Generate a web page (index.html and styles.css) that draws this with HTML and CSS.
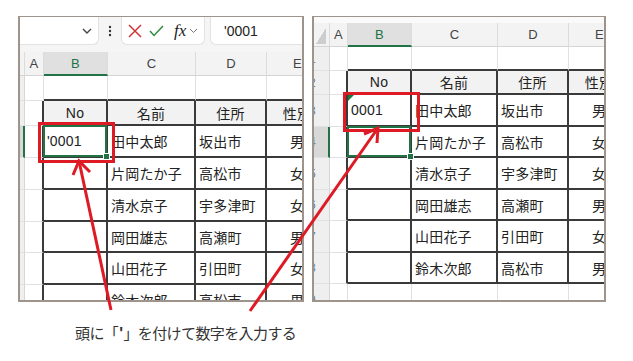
FILE: index.html
```html
<!DOCTYPE html>
<html lang="ja">

<head>
    <meta charset="UTF-8">
    <meta name="viewport" content="width=device-width, initial-scale=1.0">
    <title>Excel 0001</title>
    <link rel="stylesheet" href="styles.css">
</head>

<body>
    <div id="page">
        <div id="panels">
            <!-- before: typing '0001 -->
            <div class="panel left">
                <div class="fbar">
                    <div class="namebox">
                        <svg width="10" height="6" viewBox="0 0 10 6"><polyline points="1,1 5,5 9,1" fill="none" stroke="#444" stroke-width="1.4"/></svg>
                    </div>
                    <div class="dots">
                        <svg width="4" height="12" viewBox="0 0 4 12"><circle cx="2" cy="2" r="1.2" fill="#333"/><circle cx="2" cy="6" r="1.2" fill="#333"/><circle cx="2" cy="10" r="1.2" fill="#333"/></svg>
                    </div>
                    <div class="fbtns">
                        <svg width="14" height="14" viewBox="0 0 14 14"><path d="M1 1 L13 13 M13 1 L1 13" stroke="#d13438" stroke-width="1.5" fill="none"/></svg>
                        <svg width="15" height="12" viewBox="0 0 15 12"><polyline points="1,6 5,10.5 14,1" fill="none" stroke="#2e8b3e" stroke-width="1.5"/></svg>
                        <span class="fx">fx</span>
                        <svg width="9" height="6" viewBox="0 0 9 6"><polyline points="1,1 4.5,4.5 8,1" fill="none" stroke="#777" stroke-width="1"/></svg>
                    </div>
                    <div class="finput">'0001</div>
                </div>
                <div class="row h24 hdr">
                    <div class="c rh"></div><div class="c">A</div><div class="c sel">B</div><div class="c">C</div><div class="c">D</div><div class="c">E</div>
                </div>
                <div class="row h25">
                    <div class="c rh"></div><div class="c"></div><div class="c bt"></div><div class="c bt"></div><div class="c bt"></div><div class="c bt"></div>
                </div>
                <div class="row h25">
                    <div class="c rh"></div><div class="c bl"></div><div class="c t th">No</div><div class="c t th">名前</div><div class="c t th">住所</div><div class="c t th">性別</div>
                </div>
                <div class="row h32">
                    <div class="c rh on"></div><div class="c bl"></div><div class="c t cur">'0001</div><div class="c t">田中太郎</div><div class="c t">坂出市</div><div class="c t ctr">男</div>
                </div>
                <div class="row h32">
                    <div class="c rh"></div><div class="c bl"></div><div class="c t"></div><div class="c t">片岡たか子</div><div class="c t">高松市</div><div class="c t ctr">女</div>
                </div>
                <div class="row h32">
                    <div class="c rh"></div><div class="c bl"></div><div class="c t"></div><div class="c t">清水京子</div><div class="c t">宇多津町</div><div class="c t ctr">女</div>
                </div>
                <div class="row h31">
                    <div class="c rh"></div><div class="c bl"></div><div class="c t"></div><div class="c t">岡田雄志</div><div class="c t">高瀬町</div><div class="c t ctr">男</div>
                </div>
                <div class="row h32">
                    <div class="c rh"></div><div class="c bl"></div><div class="c t"></div><div class="c t">山田花子</div><div class="c t">引田町</div><div class="c t ctr">女</div>
                </div>
                <div class="row h32">
                    <div class="c rh"></div><div class="c bl"></div><div class="c t"></div><div class="c t">鈴木次郎</div><div class="c t">高松市</div><div class="c t ctr">男</div>
                </div>
            </div>

            <!-- after: shown as text 0001 -->
            <div class="panel right">
                <div class="strip"></div>
                <div class="row h24 hdr">
                    <div class="c rh corner"></div><div class="c">A</div><div class="c sel">B</div><div class="c">C</div><div class="c">D</div><div class="c">E</div>
                </div>
                <div class="row h24">
                    <div class="c rh"><span class="n">1</span></div><div class="c"></div><div class="c bt"></div><div class="c bt"></div><div class="c bt"></div><div class="c bt"></div>
                </div>
                <div class="row h24">
                    <div class="c rh"><span class="n">2</span></div><div class="c bl"></div><div class="c t th">No</div><div class="c t th">名前</div><div class="c t th">住所</div><div class="c t th">性別</div>
                </div>
                <div class="row h32">
                    <div class="c rh"><span class="n">3</span></div><div class="c bl"></div><div class="c t err">0001</div><div class="c t">田中太郎</div><div class="c t">坂出市</div><div class="c t ctr">男</div>
                </div>
                <div class="row h31">
                    <div class="c rh on"><span class="n">4</span></div><div class="c bl"></div><div class="c t cur"></div><div class="c t">片岡たか子</div><div class="c t">高松市</div><div class="c t ctr">女</div>
                </div>
                <div class="row h32">
                    <div class="c rh"><span class="n">5</span></div><div class="c bl"></div><div class="c t"></div><div class="c t">清水京子</div><div class="c t">宇多津町</div><div class="c t ctr">女</div>
                </div>
                <div class="row h31">
                    <div class="c rh"><span class="n">6</span></div><div class="c bl"></div><div class="c t"></div><div class="c t">岡田雄志</div><div class="c t">高瀬町</div><div class="c t ctr">男</div>
                </div>
                <div class="row h32">
                    <div class="c rh"><span class="n">7</span></div><div class="c bl"></div><div class="c t"></div><div class="c t">山田花子</div><div class="c t">引田町</div><div class="c t ctr">女</div>
                </div>
                <div class="row h31">
                    <div class="c rh"><span class="n">8</span></div><div class="c bl"></div><div class="c t"></div><div class="c t">鈴木次郎</div><div class="c t">高松市</div><div class="c t ctr">男</div>
                </div>
                <div class="row h32">
                    <div class="c rh"><span class="n">9</span></div><div class="c"></div><div class="c"></div><div class="c"></div><div class="c"></div><div class="c"></div>
                </div>
            </div>
        </div>

        <p class="caption">頭に「<span class="apos">'</span>」を付けて数字を入力する</p>

        <!-- red callouts drawn over both sheets -->
        <svg class="marks" width="633" height="361" viewBox="0 0 633 361">
            <g fill="none" stroke="#de1a24" stroke-width="3">
                <rect x="39.5" y="123.5" width="74" height="38"/>
                <rect x="344.5" y="93.5" width="74" height="37"/>
                <line x1="111" y1="310" x2="79" y2="161"/>
                <polyline points="73,175 79,161 90,172" stroke-linejoin="miter"/>
                <line x1="250" y1="311" x2="378" y2="128"/>
                <polyline points="364,134 378,128 377,143" stroke-linejoin="miter"/>
            </g>
        </svg>
    </div>
</body>

</html>
```

FILE: styles.css
```css
body {
    margin: 0;
    background-color: #ffffff;
    font-family: "Liberation Sans", "Noto Sans CJK JP", sans-serif;
    color: #222222;
}

#page {
    position: relative;
    width: 633px;
    height: 361px;
}

#panels {
    display: flex;
    gap: 8px;
    padding: 16px 0 0 18px;
}

.panel {
    height: 286px;
    box-sizing: border-box;
    border: 2px solid #9e948b;
    border-top-width: 1px;
    overflow: hidden;
    background-color: #ffffff;
}

.left {
    width: 286px;
    --cols: 5px 19px 64px 88px 71px 62px;
}

.right {
    width: 294px;
    --cols: 16px 18px 64px 86px 71px 62px;
}

/* formula bar */
.fbar {
    height: 35px;
    display: flex;
    align-items: flex-start;
    background-color: #f5f5f5;
}

.namebox {
    width: 79px;
    height: 28px;
    box-sizing: border-box;
    background-color: #ffffff;
    border: 1px solid #e2e2e2;
    border-top: none;
    border-left: none;
    border-radius: 0 0 6px 0;
    display: flex;
    align-items: center;
    justify-content: flex-end;
    padding-right: 6px;
}

.dots {
    width: 22px;
    height: 28px;
    display: flex;
    align-items: center;
    justify-content: center;
}

.fbtns {
    width: 84px;
    height: 28px;
    box-sizing: border-box;
    background-color: #ffffff;
    border: 1px solid #e2e2e2;
    border-top: none;
    border-radius: 0 0 6px 6px;
    display: flex;
    align-items: center;
    padding-left: 6px;
    gap: 7px;
}

.fx {
    font-family: "Liberation Serif", serif;
    font-style: italic;
    font-size: 17px;
    color: #222222;
    margin-left: 3px;
    margin-right: -4px;
}

.finput {
    flex: 1;
    height: 28px;
    margin-left: 5px;
    box-sizing: border-box;
    background-color: #ffffff;
    border: 1px solid #e2e2e2;
    border-top: none;
    border-right: none;
    border-radius: 0 0 0 6px;
    display: flex;
    align-items: center;
    padding-left: 13px;
    font-size: 14px;
}

/* sheet grid */
.strip {
    height: 6px;
    background-color: #fafafa;
}

.row {
    display: grid;
    grid-template-columns: var(--cols);
}

.h24 { height: 24px; }
.h25 { height: 25px; }
.h31 { height: 31px; }
.h32 { height: 32px; }

.c {
    position: relative;
    box-sizing: border-box;
    border-right: 1px solid #e1e1e1;
    border-bottom: 1px solid #e1e1e1;
    display: flex;
    align-items: center;
    padding: 0 3px;
    white-space: nowrap;
    font-size: 14px;
    letter-spacing: 0.2px;
}

.hdr .c {
    background-color: #f3f3f3;
    justify-content: center;
    font-size: 13px;
    color: #444444;
    border-right-color: #dcdcdc;
    border-bottom-color: #d4d4d4;
}

.hdr .sel {
    background-color: #e0e0e0;
    color: #217346;
    border-bottom: 2px solid #217346;
}

.rh {
    background-color: #efefef;
    padding: 0;
    border-right-color: #d6d6d6;
    overflow: hidden;
}

.rh.on {
    background-color: #d8d8d8;
    border-right: 2px solid #217346;
}

.rh .n {
    margin-left: -5px;
    font-size: 12px;
    color: #6a7f99;
}

.hdr .corner {
    background: linear-gradient(to bottom right, #f3f3f3 50%, #cdcdcd 50%);
    background-size: 10px 16px;
    background-repeat: no-repeat;
    background-position: 2px 5px;
    background-color: #f3f3f3;
}

/* table borders */
.bt {
    border-bottom: 2px solid #3a3a3a;
}

.bl {
    border-right: 2px solid #3a3a3a;
}

.t {
    border-right: 2px solid #3a3a3a;
    border-bottom: 2px solid #3a3a3a;
}

.th {
    background-color: #f2f2f2;
    justify-content: center;
}

.ctr {
    justify-content: center;
}

/* active cell */
.cur::after {
    content: "";
    position: absolute;
    left: -1px;
    top: -1px;
    right: -1px;
    bottom: -1px;
    border: 2px solid #217346;
}

.cur::before {
    content: "";
    position: absolute;
    right: -4px;
    bottom: -4px;
    width: 5px;
    height: 5px;
    background-color: #217346;
    border: 1px solid #ffffff;
    z-index: 2;
}

.err::before {
    content: "";
    position: absolute;
    left: 0;
    top: 0;
    border-top: 6px solid #1e7a3e;
    border-right: 6px solid transparent;
}

.caption {
    margin: 21px 0 0 75px;
    font-family: "Noto Sans CJK JP", sans-serif;
    font-size: 15px;
    line-height: 20px;
    letter-spacing: -0.6px;
    color: #333333;
}

.caption .apos {
    font-family: "Liberation Sans", sans-serif;
    font-weight: bold;
    font-size: 16px;
    margin: 0 1px;
}

.marks {
    position: absolute;
    left: 0;
    top: 0;
    pointer-events: none;
}
```
